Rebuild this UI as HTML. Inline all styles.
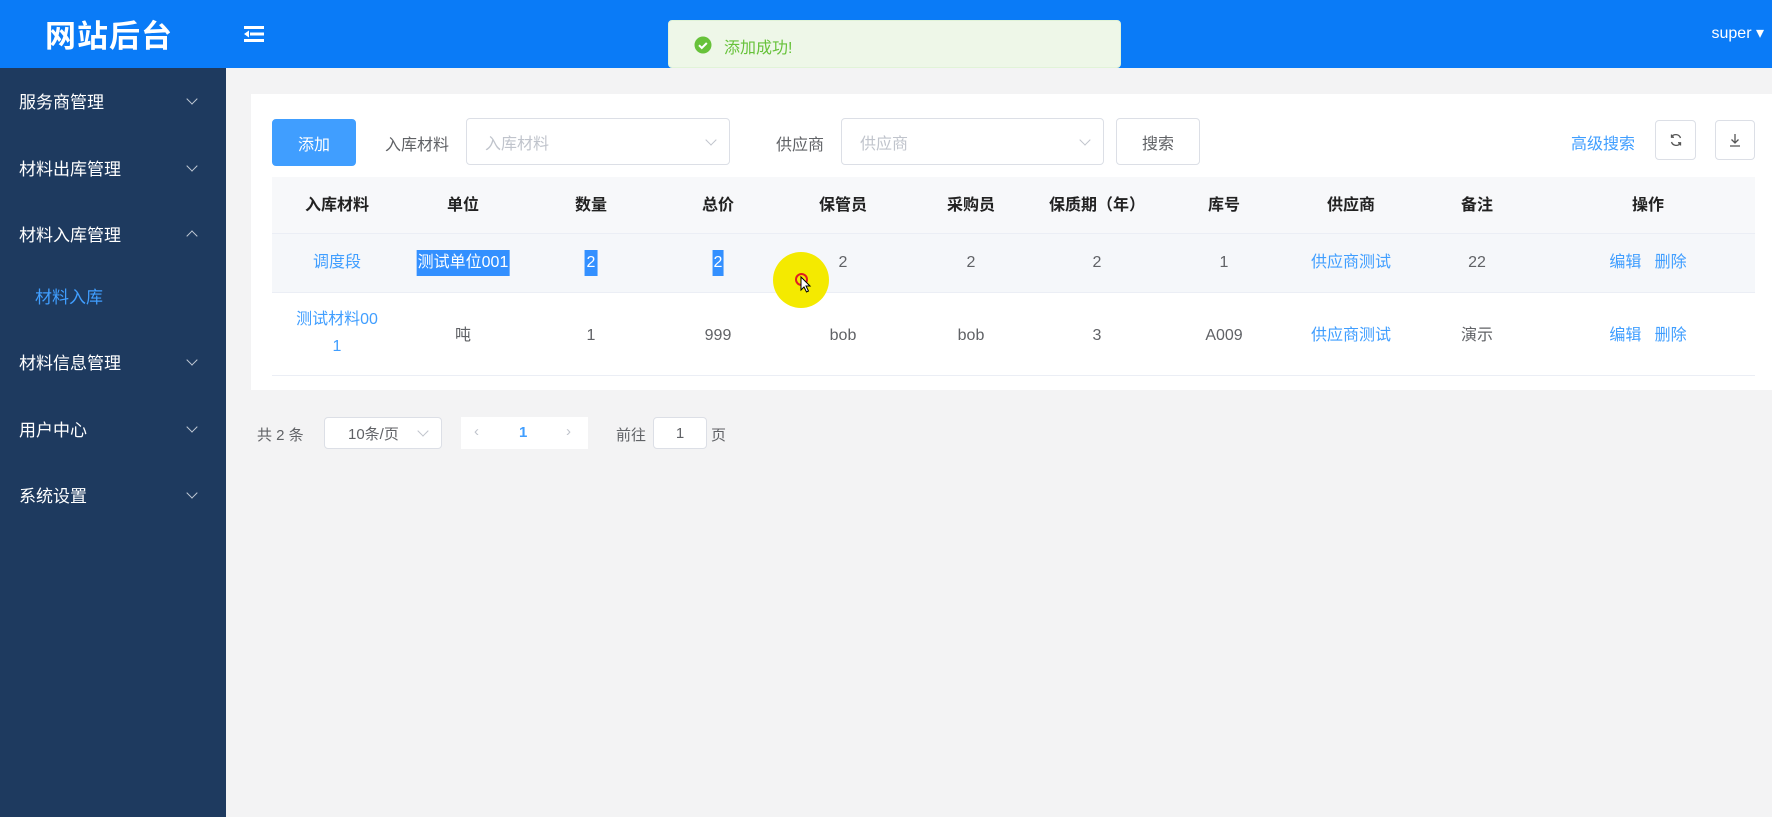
<!DOCTYPE html>
<html><head><meta charset="utf-8"><style>
*{margin:0;padding:0;box-sizing:border-box}
body{width:1772px;height:817px;overflow:hidden;background:#f3f3f4;font-family:"Liberation Sans","Noto Sans CJK SC",sans-serif;position:relative;color:#606266}
.hdr{position:absolute;left:0;top:0;width:1772px;height:68px;background:#0a7bf7}
.logo{position:absolute;left:45px;top:11px;color:#fff;font-size:31px;font-weight:bold;letter-spacing:1px}
.side{position:absolute;left:0;top:68px;width:226px;height:749px;background:#1e3a5f}
.mi{position:absolute;left:19px;color:#fff;font-size:17px;line-height:22px}
.chev{position:absolute;left:188px;width:8px;height:8px;border-right:1.3px solid #c0c8d4;border-bottom:1.3px solid #c0c8d4;transform:rotate(45deg)}
.chev.up{transform:rotate(225deg)}
.card{position:absolute;left:251px;top:94px;width:1521px;height:296px;background:#fff}
.abs{position:absolute}
.btn{position:absolute;border:1px solid #dcdfe6;border-radius:4px;background:#fff;font-size:16px;display:flex;align-items:center;justify-content:center}
.sel{position:absolute;border:1px solid #dcdfe6;border-radius:4px;background:#fff;color:#c0c4cc;font-size:16px;padding-left:18px;display:flex;align-items:center}
.sel i{position:absolute;right:14px;top:50%;width:8px;height:8px;margin-top:-6px;border-right:1px solid #c0c4cc;border-bottom:1px solid #c0c4cc;transform:rotate(45deg)}
.row{position:absolute;left:272px;width:1483px}
.c{position:absolute;text-align:center;font-size:16px;line-height:20px;transform:translateX(-50%);white-space:nowrap}
.th{color:#222;font-weight:bold}
.lk{color:#409eff}
.hl{background:#3390ff;color:#fff}
</style></head><body>
<div class="hdr">
<div class="logo">网站后台</div>
<svg class="abs" style="left:244px;top:25px" width="20" height="18" viewBox="0 0 20 18"><g fill="#fff"><rect x="0" y="1" width="20" height="3"/><rect x="6" y="7.5" width="14" height="3"/><rect x="0" y="14" width="20" height="3"/><path d="M0 9 L5 5.5 L5 12.5Z"/></g></svg>
<div class="abs" style="right:8px;top:23px;color:#fff;font-size:16px">super ▾</div>
</div>
<div class="abs" style="left:668px;top:20px;width:453px;height:48px;background:#eef7e8;border:1px solid #e1f3d8;border-radius:4px;z-index:5">
<svg class="abs" style="left:25px;top:15px" width="18" height="18" viewBox="0 0 18 18"><circle cx="9" cy="9" r="8.5" fill="#67c23a"/><path d="M5 9.2l2.8 2.8 5-5" stroke="#fff" stroke-width="2" fill="none"/></svg>
<div class="abs" style="left:55px;top:13px;color:#67c23a;font-size:16px">添加成功!</div>
</div>
<div class="side">
<div class="mi" style="top:24px">服务商管理</div><div class="chev" style="top:27px"></div>
<div class="mi" style="top:91px">材料出库管理</div><div class="chev" style="top:94px"></div>
<div class="mi" style="top:157px">材料入库管理</div><div class="chev up" style="top:164px"></div>
<div class="mi" style="top:219px;left:35px;color:#409eff">材料入库</div>
<div class="mi" style="top:285px">材料信息管理</div><div class="chev" style="top:288px"></div>
<div class="mi" style="top:352px">用户中心</div><div class="chev" style="top:355px"></div>
<div class="mi" style="top:418px">系统设置</div><div class="chev" style="top:421px"></div>
</div>
<div class="card"></div>
<div class="btn" style="left:272px;top:119px;width:84px;height:47px;background:#409eff;border-color:#409eff;color:#fff">添加</div>
<div class="abs" style="left:385px;top:131px;font-size:16px">入库材料</div>
<div class="sel" style="left:466px;top:118px;width:264px;height:47px">入库材料<i></i></div>
<div class="abs" style="left:776px;top:131px;font-size:16px">供应商</div>
<div class="sel" style="left:841px;top:118px;width:263px;height:47px">供应商<i></i></div>
<div class="btn" style="left:1116px;top:118px;width:84px;height:47px">搜索</div>
<div class="abs lk" style="left:1571px;top:130px;font-size:16px">高级搜索</div>
<div class="btn" style="left:1655px;top:120px;width:41px;height:40px"><svg width="14" height="14" viewBox="0 0 14 14" fill="none" stroke="#555" stroke-width="1.3"><path d="M11.5 5A5 5 0 0 0 2.5 4M2.5 9A5 5 0 0 0 11.5 10"/><path d="M2.5 1.5V4.2H5M11.5 12.5V9.8H9"/></svg></div>
<div class="btn" style="left:1715px;top:120px;width:40px;height:40px"><svg width="14" height="14" viewBox="0 0 14 14" fill="none" stroke="#555" stroke-width="1.3"><path d="M7 1v9M3.5 6.5L7 10l3.5-3.5M2 13h10"/></svg></div>
<div class="row" style="top:177px;height:57px;background:#f7f8fa;border-bottom:1px solid #ebeef5"></div>
<div class="row" style="top:234px;height:59px;background:#f5f7fa;border-bottom:1px solid #ebeef5"></div>
<div class="row" style="top:293px;height:83px;background:#fff;border-bottom:1px solid #ebeef5"></div>
<div class="c th" style="left:337px;top:196px">入库材料</div><div class="c th" style="left:463px;top:196px">单位</div><div class="c th" style="left:591px;top:196px">数量</div><div class="c th" style="left:718px;top:196px">总价</div><div class="c th" style="left:843px;top:196px">保管员</div><div class="c th" style="left:971px;top:196px">采购员</div><div class="c th" style="left:1097px;top:196px">保质期（年）</div><div class="c th" style="left:1224px;top:196px">库号</div><div class="c th" style="left:1351px;top:196px">供应商</div><div class="c th" style="left:1477px;top:196px">备注</div><div class="c th" style="left:1648px;top:196px">操作</div>
<div class="c lk" style="left:337px;top:253px">调度段</div><div class="c hl" style="left:463px;top:250px;padding:3px 1px">测试单位001</div><div class="c hl" style="left:591px;top:250px;padding:3px 2px">2</div><div class="c hl" style="left:718px;top:250px;padding:3px 1px">2</div><div class="c" style="left:843px;top:253px">2</div><div class="c" style="left:971px;top:253px">2</div><div class="c" style="left:1097px;top:253px">2</div><div class="c" style="left:1224px;top:253px">1</div><div class="c lk" style="left:1351px;top:253px">供应商测试</div><div class="c" style="left:1477px;top:253px">22</div><div class="c lk" style="left:1648px;top:253px">编辑&nbsp;&nbsp;&nbsp;删除</div>
<div class="c lk" style="left:337px;top:306px;line-height:27px">测试材料00<br>1</div><div class="c" style="left:463px;top:326px">吨</div><div class="c" style="left:591px;top:326px">1</div><div class="c" style="left:718px;top:326px">999</div><div class="c" style="left:843px;top:326px">bob</div><div class="c" style="left:971px;top:326px">bob</div><div class="c" style="left:1097px;top:326px">3</div><div class="c" style="left:1224px;top:326px">A009</div><div class="c lk" style="left:1351px;top:326px">供应商测试</div><div class="c" style="left:1477px;top:326px">演示</div><div class="c lk" style="left:1648px;top:326px">编辑&nbsp;&nbsp;&nbsp;删除</div>
<div class="abs" style="left:773px;top:252px;width:56px;height:56px;border-radius:50%;background:#f4ea00"></div>
<div class="abs" style="left:795px;top:273px;width:13px;height:13px;border-radius:50%;border:2.5px solid #e02020"></div>
<svg class="abs" style="left:800px;top:276px" width="12" height="18" viewBox="0 0 12 18"><path d="M1 1v13l3-3 2.5 5 2-1-2.5-5h4z" fill="#fff" stroke="#000" stroke-width="1"/></svg>
<div class="abs" style="left:257px;top:424px;font-size:15px">共 2 条</div>
<div class="sel" style="left:324px;top:417px;width:118px;height:32px;color:#606266;font-size:15px;padding-left:23px">10条/页<i></i></div>
<div class="abs" style="left:461px;top:417px;width:127px;height:32px;background:#fff"></div>
<div class="abs" style="left:474px;top:423px;color:#c0c4cc;font-size:15px">&lsaquo;</div>
<div class="abs" style="left:519px;top:424px;color:#409eff;font-size:15px;font-weight:bold">1</div>
<div class="abs" style="left:566px;top:423px;color:#c0c4cc;font-size:15px">&rsaquo;</div>
<div class="abs" style="left:616px;top:424px;font-size:15px">前往</div>
<div class="sel" style="left:653px;top:417px;width:54px;height:32px;color:#606266;font-size:15px;padding-left:0;justify-content:center">1</div>
<div class="abs" style="left:711px;top:424px;font-size:15px">页</div>
</body></html>
